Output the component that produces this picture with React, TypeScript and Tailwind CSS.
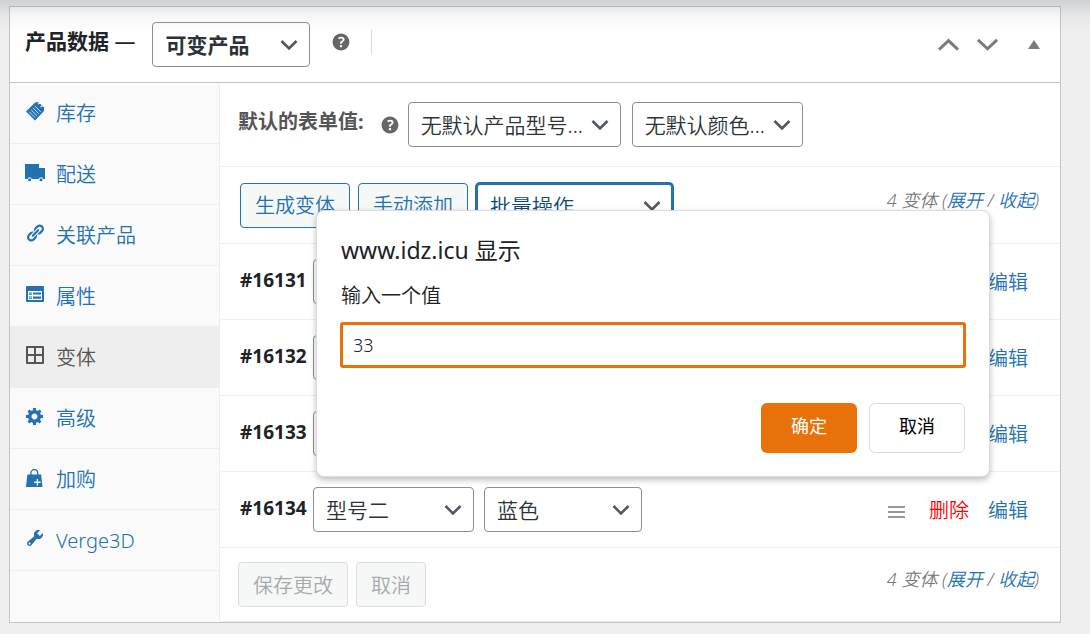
import type { ReactNode } from "react";

const GEAR_PATH =
  "M18 12h-2.18c-.17.7-.44 1.35-.81 1.93l1.54 1.54-2.1 2.1-1.54-1.54c-.58.36-1.23.63-1.91.79V19H8v-2.18c-.68-.16-1.33-.43-1.91-.79l-1.54 1.54-2.12-2.12 1.54-1.54c-.36-.58-.63-1.23-.79-1.91H1V9.03h2.17c.16-.7.44-1.35.8-1.94L2.43 5.55l2.1-2.1 1.54 1.54c.58-.37 1.24-.64 1.93-.81V2h3v2.18c.68.16 1.33.43 1.91.79l1.54-1.54 2.12 2.12-1.54 1.54c.36.59.64 1.24.8 1.94H18V12zm-8.5 1.5c1.66 0 3-1.34 3-3s-1.34-3-3-3-3 1.34-3 3 1.34 3 3 3z";
const LINK_PATH =
  "M17.74 2.76c1.68 1.69 1.68 4.41 0 6.1l-1.53 1.52c-1.12 1.12-2.7 1.47-4.14 1.09l2.62-2.61.76-.77.76-.76c.84-.84.84-2.2 0-3.04-.84-.85-2.2-.85-3.04 0l-.77.76-3.38 3.38c-.37-1.44-.02-3.02 1.1-4.14l1.52-1.53c1.69-1.68 4.42-1.68 6.1 0zM8.59 13.43l5.34-5.34c.42-.42.42-1.1 0-1.52-.44-.43-1.13-.39-1.53 0l-5.33 5.34c-.42.42-.42 1.1 0 1.52.44.43 1.13.39 1.52 0zm-.76 2.29l4.14-4.15c.38 1.44.03 3.02-1.09 4.14l-1.52 1.53c-1.69 1.68-4.41 1.68-6.1 0-1.68-1.68-1.68-4.42 0-6.1l1.53-1.52c1.12-1.12 2.7-1.47 4.14-1.1l-4.14 4.15c-.85.84-.85 2.2 0 3.05.84.84 2.2.84 3.04 0z";
const WRENCH_PATH =
  "M16.68 9.77c-1.34 1.34-3.3 1.67-4.95.99l-5.41 6.52c-.99.99-2.59.99-3.58 0s-.99-2.59 0-3.57l6.52-5.42c-.68-1.65-.35-3.61.99-4.95 1.28-1.28 3.12-1.62 4.72-1.06l-2.89 2.89 2.82 2.82 2.86-2.87c.53 1.58.18 3.39-1.08 4.65zM3.81 16.21c.4.39 1.04.39 1.43 0 .4-.4.4-1.04 0-1.43-.39-.4-1.03-.4-1.43 0-.39.39-.39 1.03 0 1.43z";
const HELP_PATH =
  "M17 10c0-3.87-3.14-7-7-7-3.87 0-7 3.13-7 7s3.13 7 7 7c3.86 0 7-3.13 7-7zm-6.3 1.48H9.14v-.43c0-.38.08-.7.24-.98s.46-.57.88-.89c.41-.29.68-.53.81-.71.14-.18.2-.39.2-.62 0-.25-.09-.44-.28-.58-.19-.13-.45-.19-.79-.19-.58 0-1.25.19-2 .57l-.64-1.28c.87-.49 1.8-.74 2.77-.74.81 0 1.45.2 1.92.58.48.39.71.91.71 1.55 0 .43-.09.8-.29 1.11-.19.32-.57.67-1.11 1.06-.38.28-.61.49-.71.63-.1.15-.15.34-.15.57v.35zm-1.47 2.74c-.18-.17-.27-.42-.27-.73 0-.33.08-.58.26-.75s.43-.25.77-.25c.32 0 .57.09.75.26s.27.42.27.74c0 .3-.09.55-.27.72-.18.18-.43.27-.75.27-.33 0-.58-.09-.76-.26z";

const TABS: { label: string; icon: ReactNode; active?: boolean }[] = [
  {
    label: "库存",
    icon: (
      <>
        <path d="M1 10.6 10.4 1.2 13.6 1.2 19 6.6V10L10 19.4z" />
        <path
          d="M13 3.2c1-1.6 4-1.4 4.4.4.3 1.4-.8 2.2-2 2.2"
          fill="none"
          stroke="#fafafa"
          strokeWidth="1.1"
        />
        <path
          d="M4.2 10.7l5.9 5.9M6.1 8.8l5.9 5.9M8 6.9l5.9 5.9M9.9 5l5.9 5.9"
          stroke="#fafafa"
          strokeWidth=".8"
        />
      </>
    ),
  },
  {
    label: "配送",
    icon: (
      <path d="M0 2h14v4h6v11h-1.8a2.3 2.3 0 0 0-4.4 0H6.8a2.3 2.3 0 0 0-4.4 0H0zM4.6 16.2a1.5 1.5 0 1 1 0 3 1.5 1.5 0 0 1 0-3zM16 16.2a1.5 1.5 0 1 1 0 3 1.5 1.5 0 0 1 0-3z" />
    ),
  },
  { label: "关联产品", icon: <path d={LINK_PATH} /> },
  {
    label: "属性",
    icon: (
      <path
        fillRule="evenodd"
        d="M2 2h16q1 0 1 1v14q0 1-1 1H2q-1 0-1-1V3q0-1 1-1zm1 5v9h14V7zm1 1.4h3v1H4zm4 0h8v2.2H8zM4 10.2h3v.8H4zm0 2.2h3v1H4zm4 0h8v2.4H8zM4 14.2h3v.8H4z"
      />
    ),
  },
  {
    label: "变体",
    active: true,
    icon: (
      <path
        fillRule="evenodd"
        d="M2 1h16q1 0 1 1v16q0 1-1 1H2q-1 0-1-1V2q0-1 1-1zm1 2v6h6V3zm8 0v6h6V3zM3 11v6h6v-6zm8 0v6h6v-6z"
      />
    ),
  },
  { label: "高级", icon: <path d={GEAR_PATH} /> },
  {
    label: "加购",
    icon: (
      <>
        <path d="M5.9 9V6a3.4 3.4 0 0 1 6.8 0v3" fill="none" stroke="currentColor" strokeWidth="1.3" />
        <path d="M2.4 7.6h13.8L17.4 20H1z" />
        <path d="M12.4 12v6.4M9.2 15.2h6.4" stroke="#fafafa" strokeWidth="1.4" />
      </>
    ),
  },
  { label: "Verge3D", icon: <path d={WRENCH_PATH} /> },
];

const VARIATIONS = [
  { id: 16131, model: "型号一", color: "红色" },
  { id: 16132, model: "型号一", color: "蓝色" },
  { id: 16133, model: "型号二", color: "红色" },
  { id: 16134, model: "型号二", color: "蓝色" },
];

// sort handle and delete link only show on the hovered row
const HOVERED_ID = 16134;

export default function App() {
  return (
    <div className="relative min-h-screen bg-[#efefef] pt-1.5 pr-[29px] pb-[11px] pl-[9px] font-['Noto_Sans','Noto_Sans_CJK_SC',sans-serif] text-[20px] leading-7 font-[350] text-[#2c3338]">
      <main className="border border-[#c3c4c7] bg-white">
        <PanelHeader />
        <div className="flex">
          <Sidebar />
          <section className="min-w-0 flex-1">
            <DefaultValues />
            <Toolbar />
            {VARIATIONS.map((variation) => (
              <VariationRow
                key={variation.id}
                {...variation}
                hovered={variation.id === HOVERED_ID}
              />
            ))}
            <div className="flex h-[74px] items-start justify-between border-b border-[#eee] pt-3.5 pr-[21px] pl-[18px]">
              <div className="flex gap-2">
                <DisabledButton>保存更改</DisabledButton>
                <DisabledButton>取消</DisabledButton>
              </div>
              <VariationCount />
            </div>
          </section>
        </div>
      </main>

      <div className="pointer-events-none absolute inset-x-0 top-0 h-8 bg-linear-to-b from-[#50576a]/20 via-[#50576a]/5 to-transparent" />
      <PromptDialog />
    </div>
  );
}

function PanelHeader() {
  return (
    <header className="flex h-[76px] items-start border-b border-[#c3c4c7] pr-5 pl-[15px]">
      <h2 className="pt-5 text-[21px] font-bold text-[#1d2327]">
        产品数据 <span className="font-normal">—</span>
      </h2>
      <div className="ml-[17px] w-[158px] pt-[15px]">
        <SelectBox label="产品类型" options={["可变产品", "简单产品"]} bold />
      </div>
      <HelpIcon className="mt-[23px] ml-[19px]" />
      <span className="mt-[23px] ml-[18px] h-6 w-px bg-[#dcdcde]" />
      <div className="ml-auto flex items-center gap-[18px] pt-7 text-[#787c82]">
        <button type="button" aria-label="上移">
          <svg width="21" height="20" viewBox="0 0 21 20" aria-hidden="true">
            <path d="M1 14.6 10.5 5.6 20 14.6" fill="none" stroke="currentColor" strokeWidth="3" />
          </svg>
        </button>
        <button type="button" aria-label="下移">
          <svg width="21" height="20" viewBox="0 0 21 20" aria-hidden="true">
            <path d="M1 4.8 10.5 13.8 20 4.8" fill="none" stroke="currentColor" strokeWidth="3" />
          </svg>
        </button>
        <button type="button" aria-label="切换面板" className="ml-3">
          <svg width="12" height="20" viewBox="0 0 12 20" aria-hidden="true">
            <path d="M6 5l6 9H0z" fill="currentColor" />
          </svg>
        </button>
      </div>
    </header>
  );
}

function Sidebar() {
  return (
    <nav className="w-[210px] shrink-0 border-r border-[#eee] bg-[#fafafa]">
      <ul>
        {TABS.map((tab) => (
          <li key={tab.label}>
            <a
              href="#"
              className={`flex h-[61px] items-center gap-[11px] border-b border-[#eee] pl-[15px] ${
                tab.active ? "bg-[#eee] text-[#555]" : "text-[#2271b1]"
              }`}
            >
              <svg
                width="20"
                height="20"
                viewBox="0 0 20 20"
                fill="currentColor"
                className="mb-1"
                aria-hidden="true"
              >
                {tab.icon}
              </svg>
              <span className="pt-0.5">{tab.label}</span>
            </a>
          </li>
        ))}
      </ul>
    </nav>
  );
}

function DefaultValues() {
  return (
    <div className="flex h-[84px] items-start border-b border-[#eee] pt-[19px] pl-[18px]">
      <strong className="pt-1.5 font-bold text-[#555]">默认的表单值:</strong>
      <HelpIcon className="mt-[11px] mr-1.5 ml-3.5" />
      <div className="flex gap-[11px]">
        <div className="w-[213px]">
          <SelectBox label="默认产品型号" options={["无默认产品型号...", "型号一", "型号二"]} />
        </div>
        <div className="w-[171px]">
          <SelectBox label="默认颜色" options={["无默认颜色...", "红色", "蓝色"]} />
        </div>
      </div>
    </div>
  );
}

function Toolbar() {
  return (
    <div className="flex h-[77px] items-start justify-between border-b border-[#eee] pt-4 pr-[21px] pl-5">
      <div className="flex gap-2">
        <OutlineButton>生成变体</OutlineButton>
        <OutlineButton>手动添加</OutlineButton>
        <div className="w-[197px]">
          <SelectBox label="批量操作" options={["批量操作", "设置常规价格"]} focused />
        </div>
      </div>
      <VariationCount />
    </div>
  );
}

function VariationRow({
  id,
  model,
  color,
  hovered,
}: {
  id: number;
  model: string;
  color: string;
  hovered: boolean;
}) {
  return (
    <div className="flex h-[76px] items-center border-b border-[#eee] pr-8 pl-5">
      <strong className="w-[73px] pb-[3px] text-[19px] font-bold text-[#1d2327]">#{id}</strong>
      <div className="w-[161px]">
        <SelectBox label={`型号 #${id}`} value={model} options={["型号一", "型号二"]} />
      </div>
      <div className="ml-2.5 w-[158px]">
        <SelectBox label={`颜色 #${id}`} value={color} options={["红色", "蓝色"]} />
      </div>
      <div className="ml-auto flex items-center pt-0.5">
        {hovered ? (
          <>
            <svg
              width="17"
              height="14"
              viewBox="0 0 17 14"
              className="mt-0.5 mr-6"
              aria-hidden="true"
            >
              <path d="M0 2h17M0 7h17M0 12h17" stroke="#999" strokeWidth="2" />
            </svg>
            <a href="#" className="mr-[19px] text-[#f00]">
              删除
            </a>
          </>
        ) : null}
        <a href="#" className="text-[#2271b1]">
          编辑
        </a>
      </div>
    </div>
  );
}

function VariationCount() {
  return (
    <span className="pt-[3px] text-[18px] text-[#777] italic">
      4 变体 (
      <a href="#" className="text-[#2271b1]">
        展开
      </a>{" "}
      /{" "}
      <a href="#" className="text-[#2271b1]">
        收起
      </a>
      )
    </span>
  );
}

function SelectBox({
  label,
  options,
  value,
  bold,
  focused,
}: {
  label: string;
  options: string[];
  value?: string;
  bold?: boolean;
  focused?: boolean;
}) {
  return (
    <div className="relative">
      <select
        aria-label={label}
        defaultValue={value ?? options[0]}
        className={`h-[45px] w-full appearance-none rounded bg-white pl-3 text-[21px] ${
          focused
            ? "border-2 border-[#2271b1] text-[#0a4b78] ring-1 ring-[#2271b1]"
            : "border border-[#8c8f94] text-[#2c3338]"
        } ${bold ? "font-bold" : ""}`}
      >
        {options.map((option) => (
          <option key={option}>{option}</option>
        ))}
      </select>
      <svg
        width="18"
        height="12"
        viewBox="0 0 18 12"
        className="pointer-events-none absolute top-[17px] right-3"
        aria-hidden="true"
      >
        <path d="M1.5 2 9 9.5 16.5 2" fill="none" stroke="#50575e" strokeWidth="2.6" />
      </svg>
    </div>
  );
}

function OutlineButton({ children }: { children: ReactNode }) {
  return (
    <button
      type="button"
      className="h-[45px] rounded border border-[#2271b1] bg-[#f6f7f7] px-3.5 text-[#2271b1]"
    >
      {children}
    </button>
  );
}

function DisabledButton({ children }: { children: ReactNode }) {
  return (
    <button
      type="button"
      disabled
      className="h-[45px] rounded border border-[#dcdcde] bg-[#f6f7f7] px-3.5 pt-0.5 text-[#a7aaad]"
    >
      {children}
    </button>
  );
}

function HelpIcon({ className }: { className: string }) {
  return (
    <svg
      width="24"
      height="24"
      viewBox="0 0 20 20"
      fill="#666"
      className={`shrink-0 ${className}`}
      role="img"
      aria-label="帮助"
    >
      <path d={HELP_PATH} />
    </svg>
  );
}

function PromptDialog() {
  return (
    <div
      role="dialog"
      aria-labelledby="prompt-title"
      className="absolute top-[210px] left-[316px] w-[674px] rounded-lg border border-[#dadcdd] bg-white px-6 pt-[23px] pb-[23px] shadow-[0_3px_6px_rgba(0,0,0,0.25)]"
    >
      <h1 id="prompt-title" className="text-[23px] leading-8 font-normal text-[#202124]">
        www.idz.icu 显示
      </h1>
      <label htmlFor="prompt-value" className="mt-4 block leading-7 text-[#202124]">
        输入一个值
      </label>
      <input
        id="prompt-value"
        type="text"
        defaultValue="33"
        className="mt-[13px] block h-11 w-full rounded-xs border-2 border-[#e8710a] bg-white px-2.5 text-[18px] text-[#202124] ring-1 ring-[#e8710a]"
      />
      <div className="mt-9 flex justify-end gap-3 text-[18px] font-normal">
        <button type="button" className="h-[50px] w-24 rounded-md bg-[#e8710a] pb-1 text-white">
          确定
        </button>
        <button
          type="button"
          className="h-[50px] w-24 rounded-md border border-[#dadce0] bg-white pb-1 text-black"
        >
          取消
        </button>
      </div>
    </div>
  );
}
